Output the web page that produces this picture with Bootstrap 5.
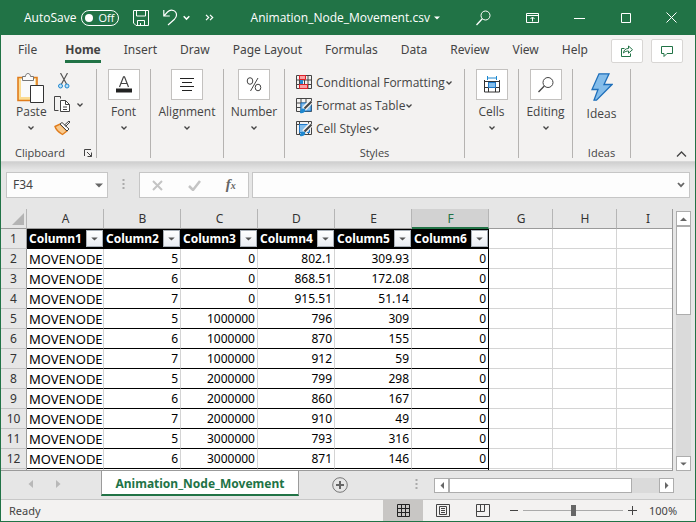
<!DOCTYPE html>
<html lang="en">
<head>
<meta charset="utf-8">
<meta name="viewport" content="width=device-width, initial-scale=1">
<title>Animation_Node_Movement.csv</title>
<link href="https://cdn.jsdelivr.net/npm/bootstrap@5.3.0/dist/css/bootstrap.min.css" rel="stylesheet">
<style>
:root{--green:#217346;--ink:#444;--line:#c6c6c6}
body{font:12px/16px "Noto Sans","Open Sans",sans-serif;color:var(--ink);background:#e6e6e6}
button,input{font:inherit;color:inherit}
svg{display:block;flex:none;fill:none;stroke:currentColor}
.app{border:1px solid var(--green);border-top:0;min-width:640px;overflow:hidden}
.app>*{flex-shrink:0}
.app>main{flex:1 1 0;min-height:0}
.plain{border:0;background:none;padding:0;color:inherit}
.titlebar{background:var(--green);height:35px;padding:0 18px 0 23px;font-family:"Open Sans","Noto Sans",sans-serif}
.pill{border:1px solid #fff;border-radius:8px;height:16px;width:38px;padding:0 4px 0 3px;margin-left:5px}
.pill input{appearance:none;width:8px;height:8px;border-radius:50%;background:#fff;margin:0}
.pill span{font-size:11px}
.tool{margin-left:14px}
.winbtns{width:201px}
.tabs{background:#f3f2f1;height:31px;padding:0 12px 0 17px}
.tablist{gap:23px}
.tabs a{line-height:21px;height:28px;padding-top:4px;color:var(--ink);text-decoration:none;border-bottom:3px solid transparent}
.tabs a.filetab{margin-right:5px}
.tabs a.current{font-weight:700;border-color:var(--green)}
.tabbtn{background:#fff;border:1px solid #d8d6d4;border-radius:2px;width:32px;height:24px;color:var(--green)}
.ribbon{background:#f3f2f1;height:96px;padding:3px 0 4px;border-bottom:1px solid #d8d8d8;font-family:"Open Sans","Noto Sans",sans-serif}
.group{border-right:1px solid #b5b3b1;height:89px;flex:none}
.w54{width:54px}.w58{width:58px}.w61{width:61px}.w73{width:73px}.w96{width:96px}.w180{width:180px}
.caption{font-size:11px;line-height:10px}
.clipcap{padding:0 4px 0 14px}
.tile{width:32px;height:31px;border:1px solid #c3c1bf;background:#fff;margin-bottom:4px}
.stylebtn{height:23px}
.paste{padding:4px 0 0 15px}
.clips{padding:4px 0 0 7px;gap:7px}
.chevgap{margin-left:5px}
.styles{padding:2px 0 0 11px}
.ideas{padding-top:4px}
.bolt{margin-bottom:5px}
.strip{height:47px;padding:10px 5px;background:linear-gradient(#cfcfcf,#e6e6e6 8px)}
.field{background:#fdfdfd;border:1px solid var(--line);height:26px}
.field input{border:0;background:none;outline:0;min-width:0}
.field svg{color:#666}
.namebox{width:102px}.fxbox{width:110px}
.dots{margin:6px 14px 0}
.formula{margin-left:3px}
.fx{font:bold 15px/18px "Liberation Serif",serif;color:#666}
.fx small{font-size:10px}
.gridwrap{overflow:hidden;min-width:0;border-bottom:1px solid #9b9b9b;border-right:1px solid #9b9b9b}
.sheet{table-layout:fixed;width:calc(100% + 7px);border-collapse:separate;border-spacing:0;line-height:18px;color:#000}
.sheet th,.sheet td{padding:1px 2px 0 3px;height:20px;white-space:nowrap;overflow:hidden;border-right:1px solid #d4d4d4;border-bottom:1px solid #d4d4d4;background:#fff;font-weight:400}
.sheet thead th{background:#e6e6e6;border-right-color:#b5b5b5;border-bottom-color:#9b9b9b;text-align:center;color:#333}
.sheet thead th.on{background:#d2d2d2;color:var(--green);border-bottom:2px solid var(--green);line-height:17px}
.sheet tbody th{background:#e6e6e6;border-right-color:#9b9b9b;border-bottom-color:#c3c3c3;text-align:center;padding:1px 0 0;color:#333}
.sheet td.d{border-bottom-color:#000;text-align:right}
.sheet td.d.t{text-align:left;padding:1px 0 0 2px;font-size:13px}
.sheet td.e{border-right-color:#000}
.sheet td.h{background:#000;border-color:#000;color:#fff;font-weight:700;padding:0 0 0 2px}
.filter{width:17px;height:17px;border:1px solid #a9b0b8;background:linear-gradient(#fff,#e8ecf2);color:#555;padding:0}
.c26{width:26px}.c77{width:77px}.c64{width:64px}
.vbar{width:22px;padding:2px 4px 0 3px;flex:none}
.sb{background:#fff;border:1px solid #adadad;color:#666;padding:0}
.vbar>.sb{height:15px}
.track{background:#dadada}
.vthumb{height:89px}
.sheetbar{height:28px}
.sheettab{background:#fff;border:1px solid #9b9b9b;border-top:0;border-bottom:2px solid var(--green);height:25px;width:198px;color:var(--green);font-weight:700;text-decoration:none;line-height:25px}
.arrows{width:100px;height:26px;padding:0 40px 0 27px}
.addsheet{margin:6px 0 0 33px}
.hbar{width:240px;height:15px;margin:7px 21px 0 0}
.hbar>button{width:15px}
.hthumb{width:183px}
.status{height:22px;background:#f3f2f1;border-top:1px solid #c8c8c8;font-size:11px}
.view{width:40px;height:21px}
.view.on{background:#c8c6c4}
.minus{margin-left:7px}
.pct{width:58px;padding-left:12px}
.zoomrange{appearance:none;width:100px;height:12px;background:linear-gradient(#aaa,#aaa) center/100% 1px no-repeat;margin:0 5px}
.zoomrange::-webkit-slider-thumb{appearance:none;width:5px;height:11px;background:#666}
</style>
</head>
<body>
<svg width="0" height="0" class="position-absolute">
  <symbol id="chev" viewBox="0 0 8 6"><path d="M1.500 1.500 4 4l2.500-2.500" stroke-width="1.300"/></symbol>
  <symbol id="tri" viewBox="0 0 8 5"><path d="M0 .5h8L4 4.500z" fill="currentColor" stroke="none"/></symbol>
</svg>
<div class="app d-flex flex-column vh-100">
  <header class="titlebar d-flex align-items-center text-white">
    <label class="d-flex align-items-center">AutoSave<span class="pill d-flex align-items-center justify-content-between"><input type="checkbox"><span>Off</span></span></label>
    <button class="plain tool" aria-label="Save"><svg width="16" height="16"><path d="M.5.5h15v15H3l-2.500-2.500zM3.500.5v5.500h9V.5M4.500 15.500v-5h7v5M7.500 13v2.500"/></svg></button>
    <button class="plain tool d-flex align-items-center" aria-label="Undo"><svg width="15" height="17"><path d="M.8 1v6h6M1 6.800 4.500 3C8-.5 13.500 1.500 13.500 6c0 2-1 3.200-2 4.200L5 16" stroke-width="1.200"/></svg><svg class="ms-1" width="9" height="8"><use href="#chev"/></svg></button>
    <button class="plain tool" aria-label="More commands"><svg width="9" height="7"><path d="M1 .8 3.700 3.500 1 6.200M5 .8l2.700 2.700L5 6.200" stroke-width="1.200"/></svg></button>
    <button class="plain d-flex align-items-center mx-auto">Animation_Node_Movement.csv<svg class="ms-1" width="6" height="4"><use href="#tri"/></svg></button>
    <div class="d-flex align-items-center justify-content-between winbtns">
      <button class="plain" aria-label="Search"><svg width="15" height="16"><circle cx="9.500" cy="5.500" r="4.500"/><path d="M6.300 8.700.5 15" stroke-width="1.300"/></svg></button>
      <button class="plain" aria-label="Ribbon display"><svg width="13" height="10"><path d="M.5.5h12v9H.5zM.5 2.500h12M6.500 8.500v-4M4.500 6l2-2 2 2"/></svg></button>
      <button class="plain" aria-label="Minimize"><svg width="11" height="10"><path d="M0 5.500h11"/></svg></button>
      <button class="plain" aria-label="Maximize"><svg width="10" height="10"><path d="M.5.5h9v9h-9z"/></svg></button>
      <button class="plain" aria-label="Close"><svg width="11" height="11"><path d="M.5.5l10 10M10.500.5l-10 10"/></svg></button>
    </div>
  </header>
  <nav class="tabs d-flex">
    <div class="d-flex flex-fill tablist">
      <a href="#" class="filetab">File</a><a href="#" class="current">Home</a><a href="#">Insert</a><a href="#">Draw</a><a href="#">Page Layout</a><a href="#">Formulas</a><a href="#">Data</a><a href="#">Review</a><a href="#">View</a><a href="#">Help</a>
    </div>
    <div class="d-flex gap-2 pt-1">
      <button class="tabbtn d-flex align-items-center justify-content-center p-0" aria-label="Share"><svg width="12" height="12"><path d="M3.500 3.500h-3v8h9v-3M2.500 8c.3-3 2-4.500 5-4.500V1l4 3.700-4 3.500V6C5.500 6 4 6.500 2.500 8z"/></svg></button>
      <button class="tabbtn d-flex align-items-center justify-content-center p-0" aria-label="Comments"><svg width="12" height="11"><path d="M.5.5h11v7H6l-3 3v-3H.5z"/></svg></button>
    </div>
  </nav>
  <section class="ribbon d-flex" aria-label="Ribbon">
    <div class="group w96 d-flex flex-column justify-content-between">
      <div class="d-flex">
        <button class="plain paste d-flex flex-column align-items-center"><svg width="28" height="31"><path d="M1 4.500h19v23H1z" fill="#fbdc93" stroke="#e07c1c" stroke-width="1.600"/><path d="M4 6h14v18H4z" fill="#fafafa" stroke="none"/><path d="M5.500 7.500v-4h3c0-4 5-4 5 0h3v4z" fill="#fafafa" stroke="#777"/><path d="M13.500 12.500h13v17h-13z" fill="#fff" stroke="#333"/></svg>Paste<svg class="mt-1" width="8" height="8"><use href="#chev"/></svg></button>
        <div class="d-flex flex-column clips">
          <button class="plain ms-1" aria-label="Cut"><svg width="12" height="16"><path d="M2.500 0 8.500 11M9.500 0 3.500 11" stroke="#555" stroke-width="1.200"/><g stroke="#1e88d0" fill="#bde0f7"><circle cx="2.500" cy="13" r="2"/><circle cx="9" cy="13" r="2"/></g></svg></button>
          <button class="plain d-flex align-items-center" aria-label="Copy"><svg width="17" height="17"><path d="M4.500 14.500h-4V.5h6v2"/><path d="M6.500 4.500h5l4 4v7h-9z" fill="#fff"/><path d="M11.500 4.500v4h4M9 11h4M9 13.500h4"/></svg><svg class="chevgap" width="8" height="8"><use href="#chev"/></svg></button>
          <button class="plain" aria-label="Format painter"><svg width="17" height="16"><path d="M1 6.500 6 4l7 7-4.500 3.500C5 12.500 2 10 1 6.500z" fill="#f8c98c" stroke="#e07c1c" stroke-width="1.400"/><path d="M6 4l2-1.500 7 6.500-2 2z" fill="#fff" stroke="#444"/><path d="M10.500 5 15 1l1 1-4.500 4.500" stroke="#444"/></svg></button>
        </div>
      </div>
      <div class="caption clipcap d-flex align-items-center justify-content-between"><span>Clipboard</span><button class="plain" aria-label="Clipboard options"><svg width="8" height="8"><path d="M.5 7V.5H7M3 3l4.500 4.500M7.500 3.500v4h-4"/></svg></button></div>
    </div>
    <div class="group w54"><button class="plain w-100 d-flex flex-column align-items-center"><span class="tile d-flex align-items-center justify-content-center"><svg width="16" height="17"><path d="M3.500 11 7.500.8h1L12.500 11M5 7.500h6" stroke-width="1.200"/><path d="M0 14.500h16" stroke="#222" stroke-width="4"/></svg></span>Font<svg class="mt-1" width="8" height="8"><use href="#chev"/></svg></button></div>
    <div class="group w73"><button class="plain w-100 d-flex flex-column align-items-center"><span class="tile d-flex align-items-center justify-content-center"><svg width="14" height="13"><path d="M0 .5h14M2 4.500h10M0 8.500h14M2 12.500h10" stroke="#222"/></svg></span>Alignment<svg class="mt-1" width="8" height="8"><use href="#chev"/></svg></button></div>
    <div class="group w61"><button class="plain w-100 d-flex flex-column align-items-center"><span class="tile d-flex align-items-center justify-content-center"><svg width="16" height="15"><ellipse cx="4" cy="4" rx="2.800" ry="3.300"/><ellipse cx="12" cy="10.500" rx="2.800" ry="3.300"/><path d="M12 1 4.500 14"/></svg></span>Number<svg class="mt-1" width="8" height="8"><use href="#chev"/></svg></button></div>
    <div class="group w180 d-flex flex-column justify-content-between">
      <div class="d-flex flex-column align-items-start styles">
        <button class="plain stylebtn d-flex align-items-center"><svg class="me-1" width="16" height="15"><path d="M.5.5h15v13H.5zM.5 5h15M.5 9.500h15M3.500.5v13M8.500.5v13M12 .5v13"/><path d="M3.500.5h6v4h-6zM3.500 9.500h8v4h-8z" fill="#f7a1a4" stroke="#e02028"/><path d="M4 5h3v4H4z" fill="#1e88d0" stroke="none"/></svg>Conditional Formatting<svg width="8" height="6"><use href="#chev"/></svg></button>
        <button class="plain stylebtn d-flex align-items-center"><svg class="me-1" width="16" height="16"><path d="M.5.5h15v13H.5zM.5 5h15M.5 9.500h15M5 .5v13M10 .5v13"/><path d="M5 5h10v8H5z" fill="#84bdea" stroke="#1e78c8"/><path d="M15.500 3 8 11" stroke="#f3f2f1" stroke-width="5"/><path d="M15.500 3.500 8.500 10.500" stroke="#444" stroke-width="2"/><path d="M4 15c0-4 2-5 5-4 1 2-1 5-5 4z" fill="#1e88d0" stroke="none"/></svg>Format as Table<svg width="8" height="6"><use href="#chev"/></svg></button>
        <button class="plain stylebtn d-flex align-items-center"><svg class="me-1" width="16" height="16"><path d="M.5.5h15v13H.5zM.5 3.500h15M3.500.5v13M12.500.5v13"/><path d="M3.500 3.500h10v8h-10z" fill="#84bdea" stroke="#1e78c8"/><path d="M15.500 3 8 11" stroke="#f3f2f1" stroke-width="5"/><path d="M15.500 3.500 8.500 10.500" stroke="#444" stroke-width="2"/><path d="M4 15c0-4 2-5 5-4 1 2-1 5-5 4z" fill="#1e88d0" stroke="none"/></svg>Cell Styles<svg width="8" height="6"><use href="#chev"/></svg></button>
      </div>
      <div class="caption text-center">Styles</div>
    </div>
    <div class="group w54"><button class="plain w-100 d-flex flex-column align-items-center"><span class="tile d-flex align-items-center justify-content-center"><svg width="16" height="17"><path d="M.5 4v12h15V4M.5 5.500h15M.5 11.500h15M4.500 5v11M11.500 5v11" stroke="#333"/><path d="M4.500 6.500h7v5h-7z" fill="#84bdea" stroke="#1e78c8"/><path d="M3.500 0v4M12.500 0v4M3.500 2h9" stroke="#1e88d0"/></svg></span>Cells<svg class="mt-1" width="8" height="8"><use href="#chev"/></svg></button></div>
    <div class="group w54"><button class="plain w-100 d-flex flex-column align-items-center"><span class="tile d-flex align-items-center justify-content-center"><svg width="16" height="16"><circle cx="10" cy="5.500" r="5"/><path d="M6.300 9 .5 15" stroke-width="1.300"/></svg></span>Editing<svg class="mt-1" width="8" height="8"><use href="#chev"/></svg></button></div>
    <div class="group w58 d-flex flex-column justify-content-between">
      <button class="plain ideas w-100 d-flex flex-column align-items-center"><svg class="bolt" width="22" height="28"><path d="M8 .8h10L13 11.500h8L5.500 27.200H3l4-10.700H1z" fill="#84bdea" stroke="#1e6fba" stroke-width="1.300"/></svg>Ideas</button>
      <div class="caption text-center">Ideas</div>
    </div>
    <button class="plain ms-auto align-self-end me-2" aria-label="Collapse ribbon"><svg width="11" height="6"><path d="M1 5.500 5.500 1 10 5.500" stroke-width="1.300"/></svg></button>
  </section>
  <div class="strip d-flex align-items-start">
    <div class="field namebox d-flex align-items-center px-1"><input class="flex-fill w-50" value="F34" aria-label="Name box"><button class="plain" aria-label="Names"><svg width="8" height="5"><use href="#tri"/></svg></button></div>
    <svg class="dots" width="3" height="14"><path d="M1.500 1v11" stroke="#aaa" stroke-width="2" stroke-dasharray="2 2"/></svg>
    <div class="field fxbox d-flex align-items-center justify-content-around">
      <button class="plain" aria-label="Cancel"><svg width="11" height="11"><path d="M1 1l9 9M10 1l-9 9" stroke="#c4c4c4" stroke-width="2"/></svg></button>
      <button class="plain" aria-label="Enter"><svg width="13" height="11"><path d="M1 6l4 4 7-9" stroke="#c4c4c4" stroke-width="2.500"/></svg></button>
      <button class="plain fx" aria-label="Insert function"><i>f<small>x</small></i></button>
    </div>
    <div class="field flex-fill d-flex align-items-center formula"><input class="flex-fill" aria-label="Formula bar"><button class="plain pe-1" aria-label="Expand"><svg width="8" height="6"><path d="M1 1l3 3.200L7 1" stroke-width="1.800"/></svg></button></div>
  </div>
  <main class="d-flex overflow-hidden">
    <div class="gridwrap flex-fill">
      <table class="sheet">
        <colgroup><col class="c26"><col class="c77"><col class="c77"><col class="c77"><col class="c77"><col class="c77"><col class="c77"><col class="c64"><col class="c64"><col></colgroup>
        <thead><tr><th><svg class="ms-auto" width="12" height="12"><path d="M12 0v12H0z" fill="#b4b4b4" stroke="none"/></svg></th><th>A</th><th>B</th><th>C</th><th>D</th><th>E</th><th class="on">F</th><th>G</th><th>H</th><th>I</th></tr></thead>
        <tbody id="rows"></tbody>
      </table>
    </div>
    <div class="vbar d-flex flex-column"><button class="sb" aria-label="Up"><svg class="mx-auto" width="7" height="4"><path d="M0 4 3.500.5 7 4z" fill="currentColor" stroke="none"/></svg></button><div class="track flex-fill"><div class="sb vthumb w-100"></div></div><button class="sb" aria-label="Down"><svg class="mx-auto" width="7" height="4"><use href="#tri"/></svg></button></div>
  </main>
  <div class="sheetbar d-flex align-items-start">
    <div class="arrows d-flex align-items-center justify-content-between"><svg width="5" height="8"><path d="M5 0v8L.5 4z" fill="#b8b8b8" stroke="none"/></svg><svg width="5" height="8"><path d="M0 0v8l4.500-4z" fill="#b8b8b8" stroke="none"/></svg></div>
    <a href="#" class="sheettab text-center">Animation_Node_Movement</a>
    <button class="plain addsheet" aria-label="New sheet"><svg width="16" height="16"><circle cx="8" cy="8" r="7.300" stroke="#777"/><path d="M8 4v8M4 8h8" stroke="#666" stroke-width="2"/></svg></button>
    <svg class="ms-auto me-3 mt-2" width="3" height="12"><path d="M1.500 0v12" stroke="#aaa" stroke-width="2" stroke-dasharray="2 2"/></svg>
    <div class="hbar track d-flex"><button class="sb" aria-label="Left"><svg class="mx-auto" width="4" height="7"><path d="M4 0v7L.5 3.500z" fill="currentColor" stroke="none"/></svg></button><div class="sb hthumb"></div><button class="sb ms-auto" aria-label="Right"><svg class="mx-auto" width="4" height="7"><path d="M0 0v7l3.500-3.500z" fill="currentColor" stroke="none"/></svg></button></div>
  </div>
  <footer class="status d-flex align-items-center ps-2">
    <span class="me-auto">Ready</span>
    <button class="plain view on d-flex align-items-center justify-content-center" aria-label="Normal"><svg width="13" height="13"><path d="M.5.5h12v12H.5zM4.500.5v12M8.500.5v12M.5 4.500h12M.5 8.500h12" stroke="#222"/></svg></button>
    <button class="plain view d-flex align-items-center justify-content-center" aria-label="Page layout"><svg width="14" height="13"><path d="M.5.5h13v12H.5zM3.500 2.500h7v8h-7zM5 4.500h4M5 6.500h4M5 8.500h4"/></svg></button>
    <button class="plain view d-flex align-items-center justify-content-center" aria-label="Page break"><svg width="14" height="13"><path d="M.5.5h13v12H.5zM4.500.5v7M8.500.5v7M.5 7.500h8"/></svg></button>
    <button class="plain minus" aria-label="Zoom out"><svg width="8" height="9"><path d="M0 4.500h8"/></svg></button>
    <input class="zoomrange" type="range" min="10" max="190" value="100" aria-label="Zoom">
    <button class="plain" aria-label="Zoom in"><svg width="9" height="9"><path d="M0 4.500h9M4.500 0v9"/></svg></button>
    <span class="pct">100%</span>
  </footer>
</div>
<script>
const data = [
  [5, 0, 802.1, 309.93], [6, 0, 868.51, 172.08], [7, 0, 915.51, 51.14],
  [5, 1000000, 796, 309], [6, 1000000, 870, 155], [7, 1000000, 912, 59],
  [5, 2000000, 799, 298], [6, 2000000, 860, 167], [7, 2000000, 910, 49],
  [5, 3000000, 793, 316], [6, 3000000, 871, 146]
];
const blank = '<td></td><td></td><td></td>';
const head = [1, 2, 3, 4, 5, 6].map(n => `<td class="h"><div class="d-flex align-items-center justify-content-between">Column${n}<button class="filter" aria-label="Filter"><svg class="mx-auto" width="7" height="4"><use href="#tri"/></svg></button></div></td>`).join('');
const last = '<tr><th></th>' + '<td class="d"></td>'.repeat(5) + `<td class="d e"></td>${blank}</tr>`;
document.getElementById('rows').innerHTML = `<tr><th>1</th>${head}${blank}</tr>` + data.map((r, i) =>
  `<tr><th>${i + 2}</th><td class="d t">MOVENODE</td>${r.map(v => `<td class="d">${v}</td>`).join('')}<td class="d e">0</td>${blank}</tr>`).join('') + last;
</script>
<script src="https://cdn.jsdelivr.net/npm/bootstrap@5.3.0/dist/js/bootstrap.bundle.min.js"></script>
</body>
</html>
